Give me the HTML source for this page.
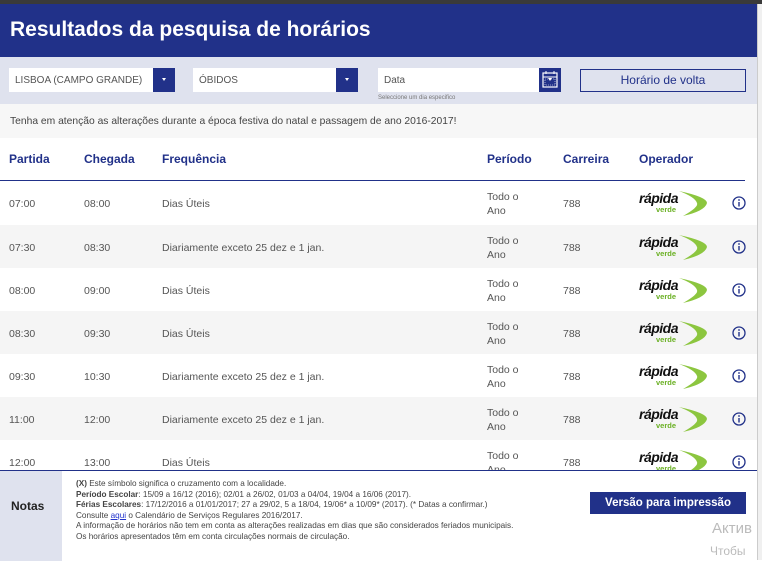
<!DOCTYPE html>
<html><head><meta charset="utf-8"><style>
*{box-sizing:border-box;margin:0;padding:0}
body{width:762px;height:560px;overflow:hidden;position:relative;background:#fff;font-family:"Liberation Sans",sans-serif;color:#444}
.top{position:absolute;left:0;top:0;width:762px;height:4px;background:#3a3a3a}
.hdr{position:absolute;left:0;top:4px;width:757px;height:53px;background:#213189}
.hdr h1{position:absolute;left:10px;top:14px;color:#fff;font-size:21px;font-weight:bold;letter-spacing:0}
.form{position:absolute;left:0;top:57px;width:757px;height:47px;background:#dfe2ee}
.sel{position:absolute;top:11px;height:24px;background:#fff;font-size:10px;color:#555;padding:7px 6px}
.sel .ar{position:absolute;right:0;top:0;width:22px;height:24px;background:#213189}
.sel .ar:after{content:"";position:absolute;left:9px;top:10px;border:2px solid transparent;border-top:3px solid #fff}
.btn{position:absolute;left:580px;top:12px;width:166px;height:23px;border:1px solid #213189;color:#213189;font-size:12px;text-align:center;line-height:21px}
.hint{position:absolute;left:378px;top:38px;font-size:6px;color:#777}
.note{position:absolute;left:0;top:104px;width:757px;height:34px;background:#f7f7f7;font-size:10.3px;padding:12px 10px;color:#444}
.th{position:absolute;top:152px;font-size:12px;font-weight:bold;color:#213189}
.line{position:absolute;left:0;top:180px;width:745px;height:1px;background:#213189}
.row{position:absolute;left:0;width:757px;height:43px;font-size:10.5px;color:#555}
.row.g{background:#f5f5f5}
.row span{position:absolute;top:17px}
.row .p{top:9px;line-height:14px}
.logo{position:absolute;left:639px;top:8px;width:70px;height:28px}
.logo b{position:absolute;left:0;top:1px;font-size:14px;font-style:italic;font-weight:900;color:#111;letter-spacing:-0.5px}
.logo i{position:absolute;left:17px;top:16px;font-size:7.5px;color:#6ab023;font-weight:bold;font-style:normal}
.info{position:absolute;left:732px;top:15px}
.foot{position:absolute;left:0;top:470px;width:757px;height:90px;background:#fff;border-top:1px solid #213189}
.notas{position:absolute;left:0;top:0;width:62px;height:90px;background:#dfe2ee;font-weight:bold;font-size:12px;color:#222;padding:28px 0 0 11px}
.ft{position:absolute;left:76px;top:8px;font-size:8.2px;line-height:10.5px;color:#444}
.pb{position:absolute;left:590px;top:21px;width:156px;height:22px;background:#213189;color:#fff;font-size:11.5px;font-weight:bold;text-align:center;line-height:22px}
.act{position:absolute;left:712px;top:520px;font-size:15px;color:#bbb}
.act2{position:absolute;left:710px;top:544px;font-size:12px;color:#bbb}
.sb{position:absolute;left:757px;top:4px;width:5px;height:556px;background:#f0f0f0;border-left:1px solid #ccc}
</style></head><body>
<div class="top"></div>
<div class="hdr"><h1>Resultados da pesquisa de horários</h1></div>
<div class="form">
 <div class="sel" style="left:9px;width:166px">LISBOA (CAMPO GRANDE)<div class="ar"></div></div>
 <div class="sel" style="left:193px;width:165px">ÓBIDOS<div class="ar"></div></div>
 <div class="sel" style="left:378px;width:183px">Data<div class="ar"><svg width="22" height="24" style="position:absolute;left:0;top:0"><rect x="4" y="5" width="14" height="14" fill="none" stroke="#fff" stroke-width="1.2"/><line x1="4" y1="9" x2="18" y2="9" stroke="#fff"/><line x1="7" y1="3" x2="7" y2="6" stroke="#fff"/><line x1="15" y1="3" x2="15" y2="6" stroke="#fff"/><rect x="6" y="11" width="10" height="6" fill="none" stroke="#fff" stroke-width=".6" stroke-dasharray="1 1"/></svg></div></div>
 <div class="hint">Seleccione um dia especifico</div>
 <div class="btn">Horário de volta</div>
</div>
<div class="note">Tenha em atenção as alterações durante a época festiva do natal e passagem de ano 2016-2017!</div>
<div class="th" style="left:9px">Partida</div>
<div class="th" style="left:84px">Chegada</div>
<div class="th" style="left:162px">Frequência</div>
<div class="th" style="left:487px">Período</div>
<div class="th" style="left:563px">Carreira</div>
<div class="th" style="left:639px">Operador</div>
<div class="line"></div>
<div id="rows"></div>
<script>
var d=[["07:00","08:00","Dias Úteis"],["07:30","08:30","Diariamente exceto 25 dez e 1 jan."],["08:00","09:00","Dias Úteis"],["08:30","09:30","Dias Úteis"],["09:30","10:30","Diariamente exceto 25 dez e 1 jan."],["11:00","12:00","Diariamente exceto 25 dez e 1 jan."],["12:00","13:00","Dias Úteis"]];
var tops=[181,225,268,311,354,397,440],h="";
d.forEach(function(r,i){h+='<div class="row'+(i%2?' g':'')+'" style="top:'+tops[i]+'px"><span style="left:9px">'+r[0]+'</span><span style="left:84px">'+r[1]+'</span><span style="left:162px">'+r[2]+'</span><span class="p" style="left:487px">Todo o<br>Ano</span><span style="left:563px">788</span><div class="logo"><svg width="70" height="28" style="position:absolute;left:0;top:0"><path d="M40 2 Q68 8 68 14 Q66 22 44 27 Q60 18 58 14 Q56 8 40 2Z" fill="#8cc63f"/></svg><b>rápida</b><i>verde</i></div><svg class="info" width="14" height="14"><circle cx="7" cy="7" r="6" fill="none" stroke="#213189" stroke-width="1.3"/><rect x="6.3" y="6" width="1.4" height="4.5" fill="#213189"/><circle cx="7" cy="4" r=".9" fill="#213189"/></svg></div>'});
document.getElementById("rows").innerHTML=h;
</script>
<div class="foot">
 <div class="notas">Notas</div>
 <div class="ft"><b>(X)</b> Este símbolo significa o cruzamento com a localidade.<br><b>Período Escolar</b>: 15/09 a 16/12 (2016); 02/01 a 26/02, 01/03 a 04/04, 19/04 a 16/06 (2017).<br><b>Férias Escolares</b>: 17/12/2016 a 01/01/2017; 27 a 29/02, 5 a 18/04, 19/06* a 10/09* (2017). (* Datas a confirmar.)<br>Consulte <u style="color:#2233cc">aqui</u> o Calendário de Serviços Regulares 2016/2017.<br>A informação de horários não tem em conta as alterações realizadas em dias que são considerados feriados municipais.<br>Os horários apresentados têm em conta circulações normais de circulação.</div>
 <div class="pb">Versão para impressão</div>
</div>
<div class="act">Актив</div><div class="act2">Чтобы</div>
<div class="sb"></div>
</body></html>
